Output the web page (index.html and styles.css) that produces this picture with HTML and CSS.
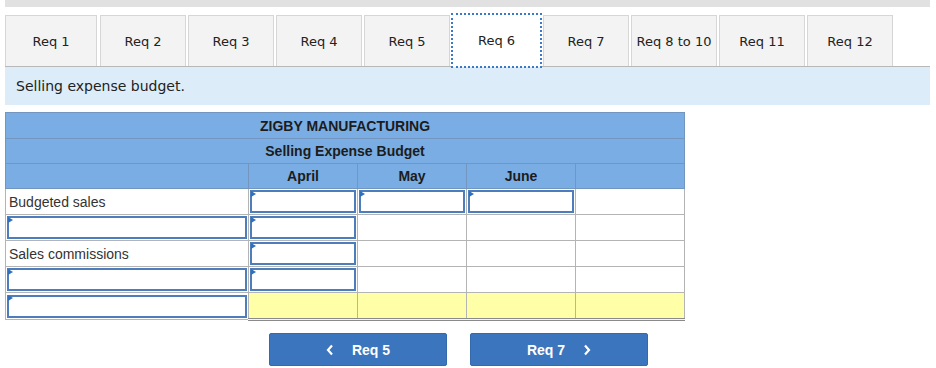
FILE: index.html
```html
<!DOCTYPE html>
<html lang="en">
<head>
    <meta charset="UTF-8">
    <meta name="viewport" content="width=device-width, initial-scale=1.0">
    <title>Req 6</title>
    <link rel="stylesheet" href="styles.css">
</head>
<body>
    <div class="topbar"></div>

    <div class="tabs">
        <div class="tab first">Req 1</div>
        <div class="tab">Req 2</div>
        <div class="tab">Req 3</div>
        <div class="tab">Req 4</div>
        <div class="tab">Req 5</div>
        <div class="tab active">Req 6</div>
        <div class="tab">Req 7</div>
        <div class="tab">Req 8 to 10</div>
        <div class="tab">Req 11</div>
        <div class="tab">Req 12</div>
    </div>

    <div class="prompt">Selling expense budget.</div>

    <!-- Budget worksheet -->
    <table class="budget">
        <colgroup>
            <col class="c-label">
            <col class="c-month">
            <col class="c-month">
            <col class="c-month">
            <col class="c-month">
        </colgroup>
        <tr class="hd r1"><th colspan="5">ZIGBY MANUFACTURING</th></tr>
        <tr class="hd r2"><th colspan="5">Selling Expense Budget</th></tr>
        <tr class="hd r3"><th></th><th>April</th><th>May</th><th>June</th><th></th></tr>
        <tr>
            <td class="label">Budgeted sales</td>
            <td class="in"><div class="box"></div></td>
            <td class="in"><div class="box"></div></td>
            <td class="in"><div class="box"></div></td>
            <td></td>
        </tr>
        <tr>
            <td class="in"><div class="box"></div></td>
            <td class="in"><div class="box"></div></td>
            <td></td>
            <td></td>
            <td></td>
        </tr>
        <tr>
            <td class="label">Sales commissions</td>
            <td class="in"><div class="box"></div></td>
            <td></td>
            <td></td>
            <td></td>
        </tr>
        <tr>
            <td class="in"><div class="box"></div></td>
            <td class="in"><div class="box"></div></td>
            <td></td>
            <td></td>
            <td></td>
        </tr>
        <tr class="total">
            <td class="in"><div class="box"></div></td>
            <td class="sum"></td>
            <td class="sum"></td>
            <td class="sum"></td>
            <td class="sum"></td>
        </tr>
    </table>

    <div class="nav">
        <button class="navbtn">
            <svg width="8" height="12" viewBox="0 0 8 12"><polyline points="6,1.5 2,6 6,10.5" fill="none" stroke="#fff" stroke-width="2.2"/></svg>
            <span>Req 5</span>
        </button>
        <button class="navbtn">
            <span>Req 7</span>
            <svg width="8" height="12" viewBox="0 0 8 12"><polyline points="2,1.5 6,6 2,10.5" fill="none" stroke="#fff" stroke-width="2.2"/></svg>
        </button>
    </div>
</body>
</html>
```

FILE: styles.css
```css
body {
    margin: 0;
    padding: 0 6px 0 5px;
    background: white;
    font-family: "DejaVu Sans", Verdana, sans-serif;
    color: #222;
}
.topbar {
    height: 7px;
    background-color: #e1e1e1;
}
.tabs {
    display: flex;
    gap: 2px;
    margin-top: 8px;
    height: 51px;
}
.tab {
    box-sizing: border-box;
    width: 86px;
    height: 51px;
    background-color: #f3f3f3;
    border: 1px solid #d6d6d6;
    border-bottom: none;
    display: flex;
    justify-content: center;
    align-items: center;
    font-size: 13px;
    color: #222;
}
.tab.first {
    width: 92px;
    margin-right: 1px;
}
.tab.active {
    background-color: white;
    border: none;
    width: 89px;
    outline: 2px dotted #3a78c8;
    outline-offset: -1px;
    height: 53px;
    margin-top: -1px;
    position: relative;
    z-index: 1;
}
.prompt {
    background-color: #dcedf9;
    border-top: 1px solid #b8b8b8;
    height: 38px;
    padding-left: 11px;
    display: flex;
    align-items: center;
    font-size: 14px;
    color: #222;
}
.budget {
    margin-top: 7px;
    width: 678px;
    table-layout: fixed;
    border-collapse: collapse;
    font-family: "Liberation Sans", Arial, sans-serif;
    font-size: 14px;
}
.c-label { width: 243px; }
.c-month { width: 109px; }
.budget th {
    background-color: #79ade3;
    border: 1px solid #7296bf;
    color: #1c1c1c;
    font-weight: bold;
    padding: 0;
    text-align: center;
}
.hd.r1 { height: 26px; }
.hd.r2, .hd.r3 { height: 25px; }
.budget td {
    border: 1px solid #b4b4b4;
    height: 25px;
    padding: 0;
    background: white;
}
.budget td.label {
    padding-left: 3px;
    color: #333;
}
.budget td.in {
    padding: 1px;
    height: 23px;
    position: relative;
}
.box {
    box-sizing: border-box;
    height: 23px;
    border: 2px solid #4d7dba;
    background: white;
}
.budget td.in::before {
    content: "";
    position: absolute;
    top: 2px;
    left: 2px;
    border-top: 3.5px solid transparent;
    border-bottom: 3.5px solid transparent;
    border-left: 5px solid #2f6fbd;
}
.total td.sum {
    height: 25px;
    background-color: #ffffa8;
    border-bottom: 3px double #8a8a8a;
}
.nav {
    display: flex;
    gap: 23px;
    margin-top: 12px;
    padding-left: 264px;
}
.navbtn {
    width: 178px;
    height: 33px;
    background-color: #3a75bd;
    border: 1px solid #346aab;
    border-radius: 2px;
    color: white;
    font-family: "Liberation Sans", Arial, sans-serif;
    font-weight: bold;
    font-size: 14px;
    display: flex;
    justify-content: center;
    align-items: center;
    gap: 18px;
    cursor: pointer;
}
```
